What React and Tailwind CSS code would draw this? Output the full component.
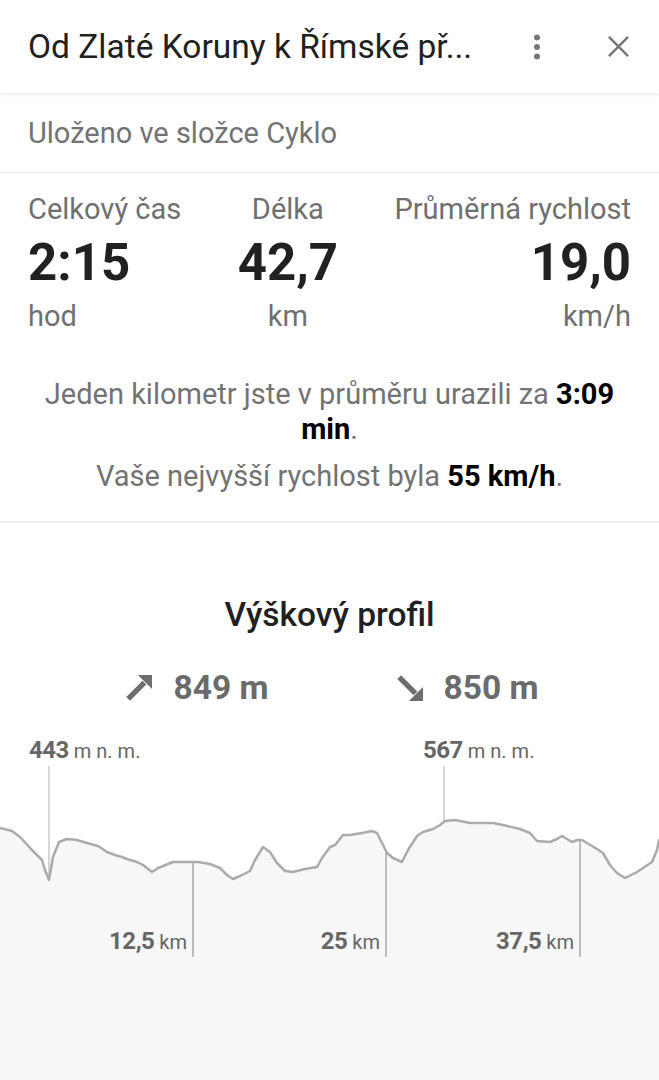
import React from 'react';

const profile = [
  [0, 828], [12, 831], [20, 837], [32, 850], [42, 860], [45, 870], [49, 880], [53, 857],
  [59, 842], [67, 839], [77, 840], [87, 843], [98, 846], [107, 852], [115, 855], [122, 857],
  [127, 859], [137, 862], [143, 865], [152, 872], [158, 868], [173, 862], [187, 862], [198, 862],
  [210, 864], [220, 868], [227, 875], [233, 879], [240, 876], [250, 871], [255, 860], [263, 847],
  [270, 852], [277, 863], [285, 871], [293, 872], [305, 869], [317, 867], [322, 858], [330, 847],
  [335, 845], [343, 835], [350, 835], [362, 833], [372, 831], [377, 833], [382, 843], [387, 853],
  [393, 858], [402, 862], [408, 850], [417, 836], [423, 832], [433, 829], [440, 825], [445, 821],
  [455, 820], [465, 822], [470, 823], [493, 823], [503, 825], [520, 829], [530, 833], [537, 841],
  [550, 842], [557, 839], [562, 836], [567, 839], [572, 842], [577, 840], [582, 840], [587, 843],
  [597, 849], [603, 853], [610, 865], [617, 873], [625, 878], [637, 872], [652, 862], [657, 850],
  [659, 840],
];

function ArrowUp() {
  return (
    <svg width="26" height="26" viewBox="0 0 24 24">
      <polygon points="24,0 24,13 11,0" fill="#6e6e6e" />
      <line x1="2" y1="22" x2="17" y2="7" stroke="#6e6e6e" strokeWidth="5" />
    </svg>
  );
}

function ArrowDown() {
  return (
    <svg width="26" height="26" viewBox="0 0 24 24">
      <polygon points="24,24 24,11 11,24" fill="#6e6e6e" />
      <line x1="2" y1="2" x2="17" y2="17" stroke="#6e6e6e" strokeWidth="5" />
    </svg>
  );
}

function Stat({ label, value, unit, align }) {
  return (
    <div className={`flex flex-col ${align}`}>
      <span className="text-[29px] leading-[34px] text-[#707070]">{label}</span>
      <span className="mt-[7px] text-[51px] leading-[60px] font-bold text-[#212121]">{value}</span>
      <span className="mt-[6px] text-[29px] leading-[34px] text-[#707070]">{unit}</span>
    </div>
  );
}

function ElevationChart() {
  const line = profile.map(([x, y]) => `${x},${y}`).join(' ');
  const area = `0,1080 ${line} 659,1080`;

  return (
    <div className="relative h-[345px]">
      <svg className="absolute inset-0" width="659" height="345" viewBox="0 735 659 345">
        <polygon points={area} fill="#f7f7f7" />
        <line x1="49" y1="766" x2="49" y2="880" stroke="#c9c9c9" strokeWidth="1.5" />
        <line x1="444" y1="766" x2="444" y2="821" stroke="#c9c9c9" strokeWidth="1.5" />
        <line x1="193" y1="862" x2="193" y2="957" stroke="#a8a8a8" strokeWidth="1.5" />
        <line x1="386" y1="852" x2="386" y2="957" stroke="#a8a8a8" strokeWidth="1.5" />
        <line x1="580" y1="840" x2="580" y2="957" stroke="#a8a8a8" strokeWidth="1.5" />
        <polyline points={line} fill="none" stroke="#ababab" strokeWidth="2.5" strokeLinejoin="round" strokeLinecap="round" />
      </svg>

      <div className="absolute left-[29px] top-0 leading-[30px] text-[#666]">
        <span className="text-[24px] font-bold -tracking-[0.5px]">443</span>
        <span className="text-[20px] ml-[5px]">m n. m.</span>
      </div>
      <div className="absolute left-[423px] top-0 leading-[30px] text-[#666]">
        <span className="text-[24px] font-bold -tracking-[0.5px]">567</span>
        <span className="text-[20px] ml-[5px]">m n. m.</span>
      </div>

      <div className="absolute right-[472px] top-[191px] leading-[30px] text-[#666]">
        <span className="text-[24px] font-bold -tracking-[0.5px]">12,5</span>
        <span className="text-[20px] ml-[5px]">km</span>
      </div>
      <div className="absolute right-[279px] top-[191px] leading-[30px] text-[#666]">
        <span className="text-[24px] font-bold -tracking-[0.5px]">25</span>
        <span className="text-[20px] ml-[5px]">km</span>
      </div>
      <div className="absolute right-[85px] top-[191px] leading-[30px] text-[#666]">
        <span className="text-[24px] font-bold -tracking-[0.5px]">37,5</span>
        <span className="text-[20px] ml-[5px]">km</span>
      </div>
    </div>
  );
}

export default function App() {
  return (
    <div className="w-[659px] min-h-[1080px] bg-white font-['Roboto',sans-serif] overflow-hidden">
      {/* header */}
      <div className="relative h-[93px] flex items-center pl-[28px] pr-[29px] bg-white shadow-[0_2px_4px_rgba(0,0,0,0.08)]">
        <h1 className="flex-1 text-[33.5px] leading-[40px] text-[#212121] whitespace-nowrap">Od Zlaté Koruny k Římské př...</h1>
        <svg width="8" height="26" viewBox="0 0 8 26" className="mr-[66px]">
          <circle cx="4" cy="3.5" r="3" fill="#777" />
          <circle cx="4" cy="13" r="3" fill="#777" />
          <circle cx="4" cy="22.5" r="3" fill="#777" />
        </svg>
        <svg width="23" height="23" viewBox="0 0 24 24">
          <path d="M2 2 L22 22 M22 2 L2 22" stroke="#777" strokeWidth="2.6" />
        </svg>
      </div>

      <div className="h-[80px] flex items-center px-[28px] border-b border-[#e6e6e6]">
        <span className="text-[29px] leading-[34px] text-[#737373]">Uloženo ve složce Cyklo</span>
      </div>

      {/* stats */}
      <div className="flex justify-between px-[28px] pt-[19px]">
        <Stat label="Celkový čas" value="2:15" unit="hod" align="items-start" />
        <Stat label="Délka" value="42,7" unit="km" align="items-center" />
        <Stat label="Průměrná rychlost" value="19,0" unit="km/h" align="items-end" />
      </div>

      <div className="px-[28px] pt-[44px] pb-[27px] text-center text-[29px] leading-[35px] text-[#737373]">
        <p>
          Jeden kilometr jste v průměru urazili za <b className="text-black font-bold">3:09</b>{' '}
          <b className="text-black font-bold">min</b>.
        </p>
        <p className="mt-[12px]">
          Vaše nejvyšší rychlost byla <b className="text-black font-bold">55 km/h</b>.
        </p>
      </div>

      <div className="h-[2px] bg-[#eeeeee]" />

      {/* elevation profile */}
      <div className="pt-[72px] flex flex-col items-center">
        <h2 className="text-[33.5px] leading-[40px] font-medium text-[#212121]">Výškový profil</h2>
        <div className="flex items-center mt-[33px] h-[40px] pl-[6px]">
          <ArrowUp />
          <span className="ml-[21px] text-[33.5px] font-bold text-[#6b6b6b]">849 m</span>
          <div className="w-[128px]" />
          <ArrowDown />
          <span className="ml-[21px] text-[33.5px] font-bold text-[#6b6b6b]">850 m</span>
        </div>
      </div>

      <div className="mt-[27px]">
        <ElevationChart />
      </div>
    </div>
  );
}
